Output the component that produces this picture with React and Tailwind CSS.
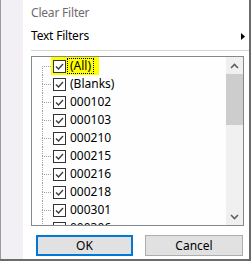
import React from "react";

const items = ["(All)", "(Blanks)", "000102", "000103", "000210", "000215", "000216", "000218", "000301", "000306"];

function Check() {
  return (
    <span className="w-[13px] h-[13px] shrink-0 border border-[#333333] bg-white flex items-center justify-center">
      <svg width="11" height="11" viewBox="0 0 11 11">
        <polyline points="2,5.5 4.5,8 9,3" fill="none" stroke="#3c3c3c" strokeWidth="1.4" />
      </svg>
    </span>
  );
}

function Chevron({ down }) {
  return (
    <svg width="9" height="6" viewBox="0 0 9 6" className={down ? "rotate-180" : ""}>
      <polyline points="1,5 4.5,1.5 8,5" fill="none" stroke="#606060" strokeWidth="1.6" />
    </svg>
  );
}

function Row({ label, first }) {
  return (
    <div className="h-[18px] flex items-center shrink-0">
      {/* tree lines */}
      <div className="w-[19px] h-full flex shrink-0">
        <div className="w-[10px]" />
        <div className="flex-1 flex flex-col">
          <div className={"h-[9px] " + (first ? "" : "border-l border-dotted border-[#a0a0a0]")} />
          <div className="flex-1 border-l border-t border-dotted border-[#a0a0a0]" />
        </div>
      </div>
      {first ? (
        <div className="h-full bg-[#ffff00] flex items-center pl-[2px] pr-[5px]">
          <Check />
          <span className="ml-[1px] px-[2px] leading-[14px] border border-dotted border-black">{label}</span>
        </div>
      ) : (
        <div className="flex items-center pl-[2px]">
          <Check />
          <span className="ml-[4px]">{label}</span>
        </div>
      )}
    </div>
  );
}

export default function App() {
  return (
    <div
      className="w-[251px] h-[261px] flex bg-white border-r-2 border-b-2 border-[#6b6b6b] text-[12px] text-black overflow-hidden"
      style={{ fontFamily: '"Noto Sans", sans-serif' }}
    >
      <div className="w-[23px] shrink-0 bg-[#f2f0f4] border-l border-[#9a9a9a]" />
      <div className="flex-1 flex flex-col">
        <div className="h-[26px] pl-2 flex items-center text-[#6d6d6d] tracking-[-0.2px]">Clear Filter</div>
        <div className="h-[20px] pl-2 pr-[4px] flex items-center justify-between">
          <span className="tracking-[-0.2px]">Text Filters</span>
          <svg width="4" height="7" viewBox="0 0 4 7">
            <polygon points="0,0 4,3.5 0,7" fill="#000" />
          </svg>
        </div>
        <div className="mt-[4px] ml-2 h-px bg-[#d5d5d5]" />
        <div className="mt-[5px] ml-2 w-[213px] h-[170px] border border-[#828790] flex bg-[#fdfefd]">
          <div className="flex-1 flex flex-col overflow-hidden leading-[18px]">
            {items.map((it, i) => (
              <Row key={it} label={it} first={i === 0} />
            ))}
          </div>
          <div className="w-[17px] bg-[#f0f0f0] flex flex-col">
            <div className="h-[17px] flex items-center justify-center">
              <Chevron />
            </div>
            <div className="h-[51px] bg-[#cdcdcd]" />
            <div className="flex-1" />
            <div className="h-[17px] flex items-center justify-center">
              <Chevron down />
            </div>
          </div>
        </div>
        <div className="mt-[9px] flex gap-[12px] pl-[13px]">
          <button className="w-[97px] h-[21px] bg-[#e1e1e1] border-2 border-[#0078d7] flex items-center justify-center">OK</button>
          <button className="w-[98px] h-[21px] bg-[#e1e1e1] border border-[#adadad] flex items-center justify-center">Cancel</button>
        </div>
      </div>
    </div>
  );
}
